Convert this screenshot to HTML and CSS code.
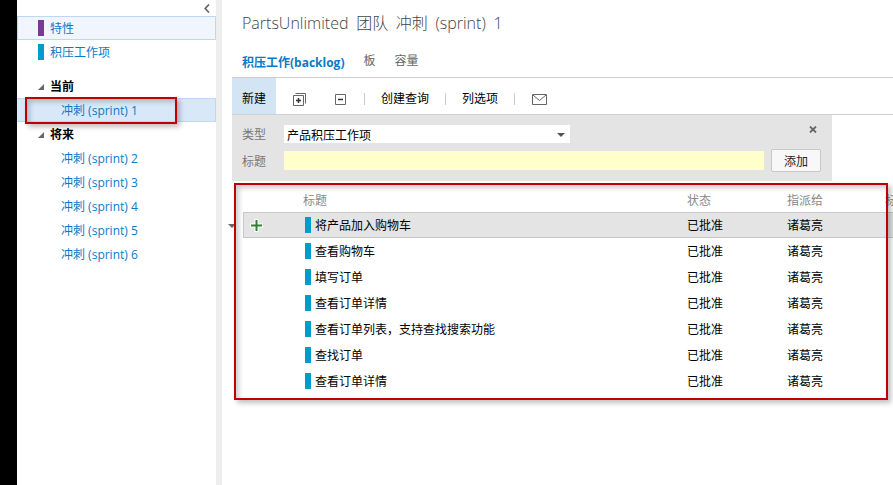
FILE: index.html
```html
<!DOCTYPE html>
<html lang="zh-CN">
  <head>
    <meta charset="UTF-8" />
    <title>PartsUnlimited 团队 冲刺 (sprint) 1</title>
    <link rel="stylesheet" href="styles.css">
  </head>
  <body>
    <div class="blackbar"></div>

    <div class="sidebar">
      <div class="collapse">
        <svg width="6" height="9" viewBox="0 0 6 9"><path d="M5 .5 1.2 4.500 5 8.500" fill="none" stroke="#666" stroke-width="1.700"/></svg>
      </div>
      <div class="nav-item nav-selected"><span class="swatch purple"></span>特性</div>
      <div class="nav-item"><span class="swatch blue"></span>积压工作项</div>

      <div class="group first-group"><span class="caret"></span>当前</div>
      <div class="sprint sprint-current">冲刺 (sprint) 1</div>
      <div class="group"><span class="caret"></span>将来</div>
      <div class="sprint">冲刺 (sprint) 2</div>
      <div class="sprint">冲刺 (sprint) 3</div>
      <div class="sprint">冲刺 (sprint) 4</div>
      <div class="sprint">冲刺 (sprint) 5</div>
      <div class="sprint">冲刺 (sprint) 6</div>
    </div>
    <div class="splitter"></div>

    <div class="main">
      <h1 class="title">PartsUnlimited 团队 冲刺 (sprint) 1</h1>
      <div class="tabs">
        <span class="tab tab-active">积压工作(backlog)</span>
        <span class="tab">板</span>
        <span class="tab">容量</span>
      </div>

      <div class="toolbar">
        <span class="tool tool-new">新建</span>
        <span class="tool-icon tool-plus">
          <svg width="13" height="13" viewBox="0 0 13 13"><path d="M2.500.5h10v10M.5 2.500h10v10H.5z" fill="none" stroke="#666"/><path d="M3 7.500h5M5.500 5v5" stroke="#333" stroke-width="1.500"/></svg>
        </span>
        <span class="tool-icon tool-minus">
          <svg width="11" height="11" viewBox="0 0 11 11"><path d="M.5.500h10v10H.5z" fill="none" stroke="#666"/><path d="M3 5.500h5" stroke="#333" stroke-width="1.500"/></svg>
        </span>
        <span class="sep"></span>
        <span class="tool">创建查询</span>
        <span class="sep"></span>
        <span class="tool">列选项</span>
        <span class="sep"></span>
        <span class="tool-icon tool-mail">
          <svg width="15" height="11" viewBox="0 0 15 11"><path d="M.5.500h14v10H.5z" fill="none" stroke="#666"/><path d="m1 1 6.500 5.500L14 1" fill="none" stroke="#666"/></svg>
        </span>
      </div>

      <div class="quick-add">
        <div class="add-row">
          <label class="add-label">类型</label>
          <div class="select">产品积压工作项<span class="select-arrow"></span></div>
          <svg class="close" width="8" height="7" viewBox="0 0 8 7"><path d="m1 .5 6 6M7 .5l-6 6" stroke="#666" stroke-width="1.800"/></svg>
        </div>
        <div class="add-row add-row-title">
          <label class="add-label">标题</label>
          <div class="title-input"></div>
          <button class="add-btn">添加</button>
        </div>
      </div>

      <div class="grid-head">
        <span class="col-title">标题</span>
        <span class="col-state">状态</span>
        <span class="col-owner">指派给</span>
        <span class="col-extra">标</span>
      </div>
      <div class="row row-selected">
        <span class="col-add"><svg width="13" height="13" viewBox="0 0 13 13"><path d="M6.500 0v13M0 6.500h13" stroke="#fff" stroke-width="4"/><path d="M6.500 1v11M1 6.500h11" stroke="#2f8032" stroke-width="2"/></svg></span>
        <span class="col-title"><i class="bar"></i>将产品加入购物车</span>
        <span class="col-state">已批准</span>
        <span class="col-owner">诸葛亮</span>
      </div>
      <div class="row"><span class="col-add"></span><span class="col-title"><i class="bar"></i>查看购物车</span><span class="col-state">已批准</span><span class="col-owner">诸葛亮</span></div>
      <div class="row"><span class="col-add"></span><span class="col-title"><i class="bar"></i>填写订单</span><span class="col-state">已批准</span><span class="col-owner">诸葛亮</span></div>
      <div class="row"><span class="col-add"></span><span class="col-title"><i class="bar"></i>查看订单详情</span><span class="col-state">已批准</span><span class="col-owner">诸葛亮</span></div>
      <div class="row"><span class="col-add"></span><span class="col-title"><i class="bar"></i>查看订单列表，支持查找搜索功能</span><span class="col-state">已批准</span><span class="col-owner">诸葛亮</span></div>
      <div class="row"><span class="col-add"></span><span class="col-title"><i class="bar"></i>查找订单</span><span class="col-state">已批准</span><span class="col-owner">诸葛亮</span></div>
      <div class="row"><span class="col-add"></span><span class="col-title"><i class="bar"></i>查看订单详情</span><span class="col-state">已批准</span><span class="col-owner">诸葛亮</span></div>
    </div>

    <!-- things drawn over the screenshot -->
    <span class="row-marker"></span>
    <div class="callout callout-sprint"></div>
    <div class="callout callout-grid"></div>
  </body>
</html>
```

FILE: styles.css
```css
html, body {
  margin: 0;
  height: 100%;
  overflow: hidden;
}

body {
  display: flex;
  position: relative;
  font-family: "Open Sans", "Noto Sans CJK SC", sans-serif;
  font-size: 12px;
  color: #000;
  background: #fff;
}

.blackbar {
  flex: none;
  width: 17px;
  background: #000;
}

.sidebar {
  flex: none;
  width: 199px;
}

.splitter {
  flex: none;
  width: 6px;
  background: #eeeeee;
}

.collapse {
  height: 16px;
  padding-right: 6px;
  box-sizing: border-box;
  display: flex;
  justify-content: flex-end;
  align-items: center;
}

.nav-item {
  height: 24px;
  box-sizing: border-box;
  display: flex;
  align-items: center;
  padding-left: 21px;
  color: #0a7ac6;
}

.nav-selected {
  background: #f1f6fe;
  border: 1px solid #bcd8f6;
}

.nav-selected .swatch {
  margin-left: -1px;
}

.swatch {
  width: 6px;
  height: 16px;
  margin-right: 6px;
}

.purple { background: #773b93; }
.blue { background: #009ccc; }

.group {
  height: 24px;
  display: flex;
  align-items: center;
  padding-left: 21px;
  font-weight: bold;
}

.first-group {
  margin-top: 10px;
}

.caret {
  width: 0;
  height: 0;
  margin-right: 6px;
  margin-top: 2px;
  border-left: 6px solid transparent;
  border-bottom: 6px solid #666;
}

.sprint {
  height: 24px;
  box-sizing: border-box;
  display: flex;
  align-items: center;
  padding-left: 44px;
  color: #0a7ac6;
}

.sprint-current {
  background: #d9e8f9;
  border: 1px solid #bcd8f6;
  border-left: 0;
}

.main {
  flex: 1;
  min-width: 0;
  padding-left: 10px;
}

.title {
  margin: 0;
  height: 47px;
  padding: 11px 0 0 10px;
  box-sizing: border-box;
  font-size: 16px;
  line-height: 25px;
  font-weight: 300;
  word-spacing: 3.500px;
  color: #444;
}

.tabs {
  height: 30px;
  display: flex;
  align-items: center;
  padding: 0 0 1px 10px;
  box-sizing: border-box;
  gap: 19px;
  color: #666;
}

.tab {
  margin-bottom: 4px;
}

.tab-active {
  margin-bottom: 0;
  color: #0a7ac6;
  font-weight: bold;
}

.toolbar {
  height: 38px;
  box-sizing: border-box;
  display: flex;
  align-items: stretch;
  border-top: 1px solid #cfcfcf;
  border-bottom: 1px solid #cfcfcf;
}

.tool {
  padding: 6px 16px 0;
  line-height: 30px;
}

.tool-new {
  width: 44px;
  box-sizing: border-box;
  padding-left: 10px;
  padding-right: 0;
  background: #d3e4f4;
  margin-right: 17px;
}

.tool-icon {
  display: flex;
  align-items: center;
  padding-top: 6px;
}

.tool-plus {
  margin-right: 29px;
}

.tool-minus {
  margin-right: 18px;
}

.tool-mail {
  margin-left: 17px;
}

.sep {
  width: 1px;
  height: 12px;
  margin-top: 15px;
  background: #ccc;
}

.quick-add {
  width: 600px;
  height: 66px;
  box-sizing: border-box;
  padding-top: 10px;
  background: #e4e4e4;
}

.add-row {
  display: flex;
  align-items: center;
  height: 18px;
}

.add-row-title {
  margin-top: 8px;
  height: 19px;
}

.add-label {
  width: 52px;
  padding-left: 10px;
  box-sizing: border-box;
  color: #777;
}

.select {
  width: 286px;
  height: 18px;
  box-sizing: border-box;
  padding-left: 3px;
  padding-top: 1px;
  background: #fff;
  display: flex;
  justify-content: space-between;
  align-items: center;
}

.select-arrow {
  width: 0;
  height: 0;
  margin-right: 5px;
  border: 4px solid transparent;
  border-top: 4px solid #555;
  border-bottom: 0;
}

.close {
  margin-left: 239px;
  margin-top: 1px;
  align-self: flex-start;
}

.title-input {
  width: 480px;
  height: 19px;
  background: #ffffcc;
}

.add-btn {
  margin-left: 7px;
  width: 50px;
  height: 23px;
  padding: 0;
  font: inherit;
  color: #222;
  background: #f8f8f8;
  border: 1px solid #c8c8c8;
  border-radius: 2px;
}

.grid-head,
.row {
  display: grid;
  grid-template-columns: 60px 384px 100px 98px 1fr;
  margin-left: 11px;
  white-space: nowrap;
}

.grid-head {
  height: 31px;
  align-items: end;
  padding-bottom: 3px;
  box-sizing: border-box;
  color: #888;
}

.col-title {
  display: flex;
  align-items: center;
}

.grid-head .col-title {
  grid-column: 2;
}

.row {
  height: 26px;
  box-sizing: border-box;
  align-items: center;
}

.row-selected {
  background: #e4e4e4;
  border-top: 1px solid #c8c8c8;
  border-bottom: 1px solid #c8c8c8;
  box-shadow: inset 1px 0 0 #c8c8c8;
}

.col-add {
  display: flex;
  padding-left: 7px;
}

.bar {
  width: 6px;
  height: 16px;
  margin: 0 4px 0 2px;
  background: #009ccc;
}

.row-marker {
  position: absolute;
  left: 228px;
  top: 224px;
  width: 0;
  height: 0;
  border: 4px solid transparent;
  border-top: 4px solid #666;
  border-bottom: 0;
}

.callout {
  position: absolute;
  box-sizing: border-box;
  border: 2px solid #c00000;
  box-shadow: 3px 3px 5px rgba(0, 0, 0, 0.25), inset 3px 3px 5px rgba(0, 0, 0, 0.2);
}

.callout-sprint {
  left: 25px;
  top: 97px;
  width: 152px;
  height: 27px;
}

.callout-grid {
  left: 234px;
  top: 183px;
  width: 654px;
  height: 217px;
}
```
